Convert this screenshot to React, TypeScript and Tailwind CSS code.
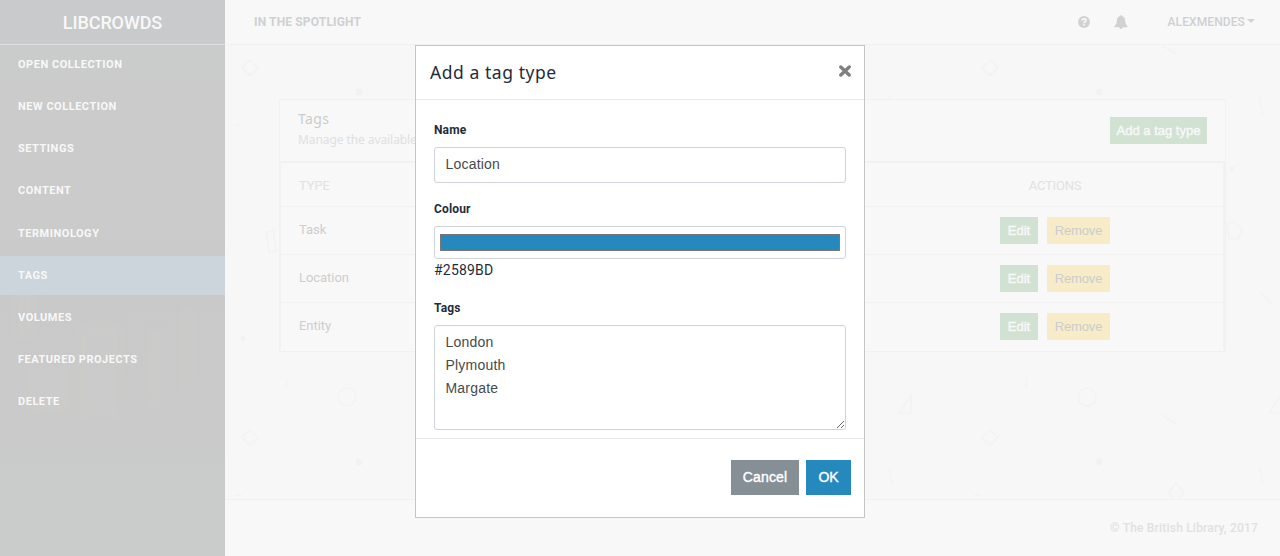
import React, { useState } from "react";

const navItems = [
  "Open collection",
  "New collection",
  "Settings",
  "Content",
  "Terminology",
  "Tags",
  "Volumes",
  "Featured projects",
  "Delete",
];

const tagTypes = ["Task", "Location", "Entity"];

function QuestionIcon() {
  return (
    <svg viewBox="0 0 12 12" className="block h-3 w-3">
      <circle cx="6" cy="6" r="6" fill="#d2d2d3" />
      <path d="M4 4.500Q4.300 2.900 6 2.900Q7.900 2.900 7.900 4.400Q7.900 5.300 6.900 5.800Q6.100 6.200 6.100 7" fill="none" stroke="#f8f8f8" strokeWidth="1.700" />
      <rect x="5.200" y="7.900" width="1.700" height="1.600" fill="#f8f8f8" />
    </svg>
  );
}

function BellIcon() {
  return (
    <svg viewBox="0 0 14 14" className="block h-3.5 w-3.5">
      <path
        d="M7 0Q7.800 0 7.800 .9Q11 1.600 11 5Q11 9.200 13.800 11.500Q13.500 12.300 12.800 12.300H8.800Q8.600 14 7 14T5.200 12.300H1.200Q.5 12.300 .2 11.500Q3 9.200 3 5Q3 1.600 6.200 .9Q6.200 0 7 0Z"
        fill="#d2d2d3"
      />
    </svg>
  );
}

function CloseIcon() {
  return (
    <svg viewBox="0 0 12 12" className="block h-3 w-3">
      <path d="M1.800 2L10.200 10M10.200 2L1.800 10" stroke="#7f7f7f" strokeWidth="3.400" strokeLinecap="round" />
    </svg>
  );
}

function ShapesBackground() {
  return (
    <svg className="absolute inset-0 h-full w-full" aria-hidden="true">
      <defs>
        <pattern id="shapes" width="370" height="370" patternUnits="userSpaceOnUse">
          <g fill="none" stroke="#f3f3f3" strokeWidth="1.700">
            <path d="M25 15L33 22.500L25 30.500L17 22.500Z" />
            <path d="M9 80.500L17 79.500" />
            <path d="M41 187L48 186L51 206L44 207Z" />
            <path d="M61.500 333V343" />
            <circle cx="122" cy="352" r="9" />
            <path d="M304 368L316 368L316 350Z" />
            <path d="M197 0L211 9M197 370L211 379" />
            <path d="M294 52L298 70" />
            <path d="M262 178L270 177L277 184L273 194L264 194Z" />
            <path d="M294 246L306 258" />
            <path d="M211 67L219 78L211 89L204 78Z" />
          </g>
          <g fill="#f2f2f2">
            <circle cx="134" cy="47" r="3.500" />
            <circle cx="18" cy="293.500" r="2.500" />
            <path d="M264 122H270L267 127Z" />
          </g>
        </pattern>
      </defs>
      <rect width="100%" height="100%" fill="url(#shapes)" />
    </svg>
  );
}

function SidebarTexture() {
  return (
    <svg className="absolute inset-0 h-full w-full" preserveAspectRatio="none" viewBox="0 0 225 511" aria-hidden="true">
      <defs>
        <filter id="soft">
          <feGaussianBlur stdDeviation="3" />
        </filter>
        <linearGradient id="shade" x2="0" y2="1">
          <stop offset="0" stopColor="#cacccb" />
          <stop offset=".35" stopColor="#cacbca" />
          <stop offset=".5" stopColor="#c9c9c9" />
          <stop offset=".72" stopColor="#c9cac9" />
          <stop offset=".9" stopColor="#cacccb" />
        </linearGradient>
      </defs>
      <rect width="225" height="511" fill="url(#shade)" />
      <g filter="url(#soft)" fill="#cccccb" opacity=".5">
        <rect x="78" y="280" width="42" height="95" />
        <rect x="26" y="320" width="46" height="50" />
        <rect x="148" y="285" width="14" height="80" />
        <rect x="16" y="245" width="18" height="50" />
        <rect x="183" y="262" width="10" height="90" />
      </g>
    </svg>
  );
}

export default function App() {
  const [name, setName] = useState("Location");
  const [tags, setTags] = useState("London\nPlymouth\nMargate");

  return (
    <div className="relative flex h-[556px] w-[1280px] overflow-hidden bg-[#f7f7f7] font-['Roboto','Liberation_Sans',sans-serif] text-[13px]">
      <aside className="flex w-[225px] shrink-0 flex-col">
        <div className="flex h-[45px] shrink-0 items-center justify-center border-b border-[#dfe0df] bg-[#c9cacc] text-[18px] font-medium tracking-[-0.100px] text-[#f8f8f8]">
          LIBCROWDS
        </div>
        <div className="relative flex-1">
          <SidebarTexture />
          <nav className="relative flex flex-col gap-[3.170px]">
            {navItems.map((item) => (
              <a
                key={item}
                className={
                  "flex h-[39px] shrink-0 items-center pl-[18px] text-[11px] font-bold uppercase leading-none tracking-[0.520px] text-[#f8f8f8] " +
                  (item === "Tags" ? "bg-[#ccd4dc]" : "")
                }
              >
                {item}
              </a>
            ))}
          </nav>
        </div>
      </aside>

      <div className="flex min-w-0 flex-1 flex-col">
        <header className="flex h-[45px] shrink-0 items-center border-b border-[#f1f1f1] bg-[#f8f8f8] pl-[29px] pr-[25px] text-[12px] font-bold leading-none text-[#cfd0d2]">
          <span className="flex-1 tracking-[0.150px]">IN THE SPOTLIGHT</span>
          <span className="mr-6"><QuestionIcon /></span>
          <span className="mr-10"><BellIcon /></span>
          <span className="font-medium tracking-[0.100px]">ALEXMENDES</span>
          <svg viewBox="0 0 8 4" className="mb-0.5 ml-[2px] h-1 w-2"><path d="M0 0H8L4 4Z" fill="#d2d2d3" /></svg>
        </header>

        <main className="relative flex-1 pl-[54px] pr-[54px] pt-[54px]">
          <ShapesBackground />
          <section className="relative h-[253px] border border-[#f1f1f1] bg-[#f8f8f8]">
            <div className="flex h-[61px] items-center justify-between pl-[18px] pr-[18px]">
              <div className="pb-[3px] font-['Noto_Sans',sans-serif] text-[#cbccce]">
                <h1 className="text-[14px] leading-[20px] tracking-[0.350px]">Tags</h1>
                <p className="mt-px text-[12px] leading-[20px] tracking-[-0.080px] text-[#dfe0e1]">Manage the available</p>
              </div>
              <button className="h-[27px] w-[97px] bg-[#d1e2d3] font-['Liberation_Sans',sans-serif] text-[13px] text-[#f8f8f8] [-webkit-text-stroke:0.400px_#f8f8f8]">
                Add a tag type
              </button>
            </div>
            <table className="w-full table-fixed border-separate border-spacing-0 border-2 border-b-0 border-l border-[#f2f2f2] text-[#cdcecf]">
              <thead>
                <tr className="h-[43px] text-[#e0e2e3]">
                  <th className="pl-[18px] pt-[2px] text-left font-normal tracking-[-0.100px]">TYPE</th>
                  <th className="w-[336px] pt-[2px] text-center font-normal tracking-[-0.200px]">ACTIONS</th>
                </tr>
              </thead>
              <tbody>
                {tagTypes.map((type) => (
                  <tr key={type} className="h-12">
                    <td className="border-t border-[#f2f2f2] pb-[2px] pl-[18px] tracking-[-0.050px]">{type}</td>
                    <td className="border-t border-[#f2f2f2]">
                      <div className="flex justify-center gap-[9px] font-['Liberation_Sans',sans-serif]">
                        <button className="h-[27px] w-[38px] bg-[#d1e2d3] text-[#f8f8f8] [-webkit-text-stroke:0.400px_#f8f8f8]">Edit</button>
                        <button className="h-[27px] w-[63px] bg-[#f7ebc8] tracking-[-0.150px] text-[#cbccce]">Remove</button>
                      </div>
                    </td>
                  </tr>
                ))}
              </tbody>
            </table>
          </section>
        </main>

        <footer className="flex h-[57px] shrink-0 items-center justify-end border-t border-[#f1f1f1] bg-[#f8f8f8] pr-[22px] text-[12px] font-medium tracking-[0.200px] text-[#e0e1e2]">
          © The British Library, 2017
        </footer>
      </div>

      <div role="dialog" className="absolute left-[415px] top-[45px] flex h-[473px] w-[450px] flex-col border border-[#c4c5c6] bg-white text-[#1f2d3a]">
        <div className="flex h-[54px] shrink-0 items-center justify-between border-b border-[#e8e9ea] pl-[14px] pr-[13px]">
          <h2 className="font-['Noto_Sans',sans-serif] text-[17.500px] leading-none tracking-[0.560px]">Add a tag type</h2>
          <button aria-label="Close" className="mb-[3px]"><CloseIcon /></button>
        </div>
        <div className="flex h-[339px] shrink-0 flex-col border-b border-[#e8e9ea] px-[18px] pt-[22px]">
          <label className="text-[12px] font-bold leading-4 tracking-[0.150px]">Name</label>
          <input
            value={name}
            onChange={(e) => setName(e.target.value)}
            className="mt-[9px] h-9 w-full shrink-0 rounded-[3px] border border-[#cfd2d8] px-[10.500px] pb-[2px] font-['Liberation_Sans',sans-serif] text-[14px] tracking-[0.200px] text-[#464a4c] outline-none"
          />
          <label className="mt-[18px] text-[12px] font-bold leading-4 tracking-[0.150px]">Colour</label>
          <div className="mt-[9px] flex h-[33px] shrink-0 rounded-[3px] border border-[#cfd2d8] px-[5px] py-[7px]">
            <div className="w-full border border-[#777] bg-[#2589bd]" />
          </div>
          <div className="mt-px text-[14px] leading-[21px] tracking-[0.200px]">#2589BD</div>
          <label className="mt-[19px] text-[12px] font-bold leading-4 tracking-[0.100px]">Tags</label>
          <textarea
            value={tags}
            onChange={(e) => setTags(e.target.value)}
            className="mt-[9px] h-[105px] w-full shrink-0 rounded-[3px] border border-[#cfd2d8] px-[10.500px] py-[5px] font-['Liberation_Sans',sans-serif] text-[14px] leading-[23px] tracking-[0.200px] text-[#464a4c] outline-none"
          />
        </div>
        <div className="flex flex-1 items-center justify-end gap-[7px] pb-[2px] pr-[13px] font-['Liberation_Sans',sans-serif] text-[14px] text-white">
          <button className="h-[35px] w-[68px] bg-[#868e96] tracking-[0.150px] [-webkit-text-stroke:0.400px_white]">Cancel</button>
          <button className="h-[35px] w-[45px] bg-[#2589bd] [-webkit-text-stroke:0.400px_white]">OK</button>
        </div>
      </div>
    </div>
  );
}
